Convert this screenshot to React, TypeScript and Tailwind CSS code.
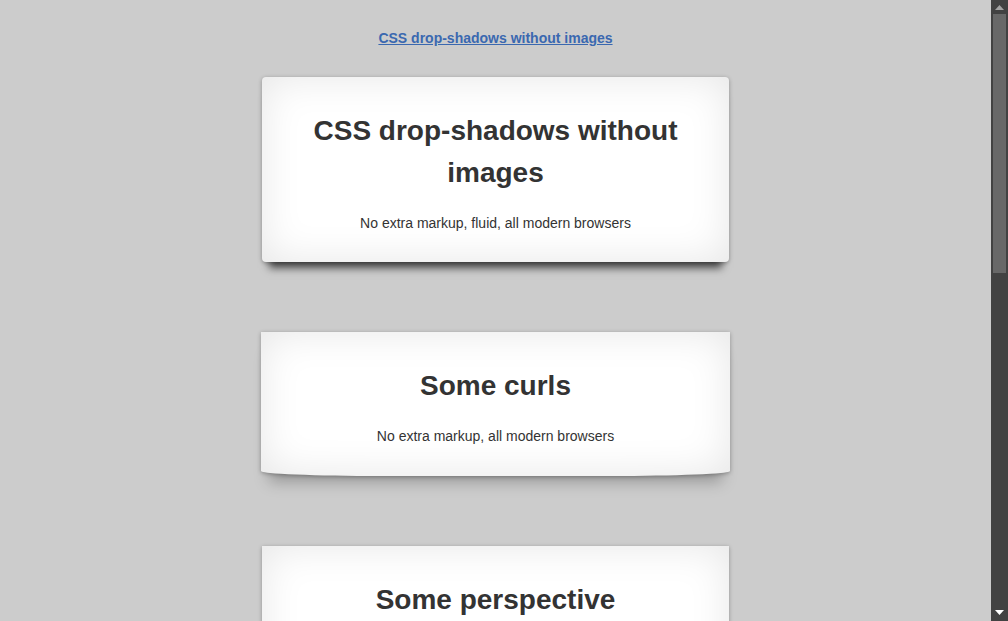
function Scrollbar() {
  return (
    <div className="w-[17px] h-full bg-[#424242] flex flex-col items-center shrink-0">
      <div className="h-[14px] w-full flex items-center justify-center">
        <svg width="9" height="5" viewBox="0 0 9 5">
          <path d="M4.5 0 L9 5 L0 5 Z" fill="#a3a3a3" />
        </svg>
      </div>
      <div className="w-[13px] h-[259px] bg-[#686868]" />
      <div className="flex-1" />
      <div className="h-[16px] w-full flex items-start justify-center pt-[5px]">
        <svg width="9" height="5" viewBox="0 0 9 5">
          <path d="M0 0 L9 0 L4.5 5 Z" fill="#ffffff" />
        </svg>
      </div>
    </div>
  )
}

export default function App() {
  return (
    <div className="flex h-[621px] w-full overflow-hidden font-['Liberation_Sans',Arial,sans-serif] text-[#333]">
      <div className="flex-1 bg-[#cccccc] flex flex-col items-center pt-[28px] overflow-hidden">
        <a href="#" className="text-[14px] leading-[21px] font-bold text-[#3a68b0] underline">
          CSS drop-shadows without images
        </a>

        <div className="flex flex-col gap-[70px] mt-[28px]">
          {/* lifted */}
          <div className="w-[467px] bg-white rounded-[4px] text-center px-[40px] pt-[33px] pb-[28px] shadow-[0_13px_8px_-7px_rgba(0,0,0,0.65),0_1px_4px_rgba(0,0,0,0.3),inset_0_0_40px_rgba(0,0,0,0.1)]">
            <h1 className="text-[28px] leading-[42px] font-bold mb-[19px]">CSS drop-shadows without images</h1>
            <p className="text-[14px] leading-[21px]">No extra markup, fluid, all modern browsers</p>
          </div>

          {/* curls */}
          <div className="w-[469px] -mx-px bg-white rounded-b-[120px_5px] text-center px-[40px] pt-[33px] pb-[29px] shadow-[0_14px_14px_-8px_rgba(0,0,0,0.25),0_1px_4px_rgba(0,0,0,0.3),inset_0_0_40px_rgba(0,0,0,0.1)]">
            <h1 className="text-[28px] leading-[42px] font-bold mb-[19px]">Some curls</h1>
            <p className="text-[14px] leading-[21px]">No extra markup, all modern browsers</p>
          </div>

          {/* perspective */}
          <div className="w-[467px] bg-white text-center px-[40px] pt-[33px] pb-[28px] shadow-[0_1px_4px_rgba(0,0,0,0.3),inset_0_0_40px_rgba(0,0,0,0.1)]">
            <h1 className="text-[28px] leading-[42px] font-bold mb-[19px]">Some perspective</h1>
            <p className="text-[14px] leading-[21px]">No extra markup, all modern browsers</p>
          </div>
        </div>
      </div>
      <Scrollbar />
    </div>
  )
}
